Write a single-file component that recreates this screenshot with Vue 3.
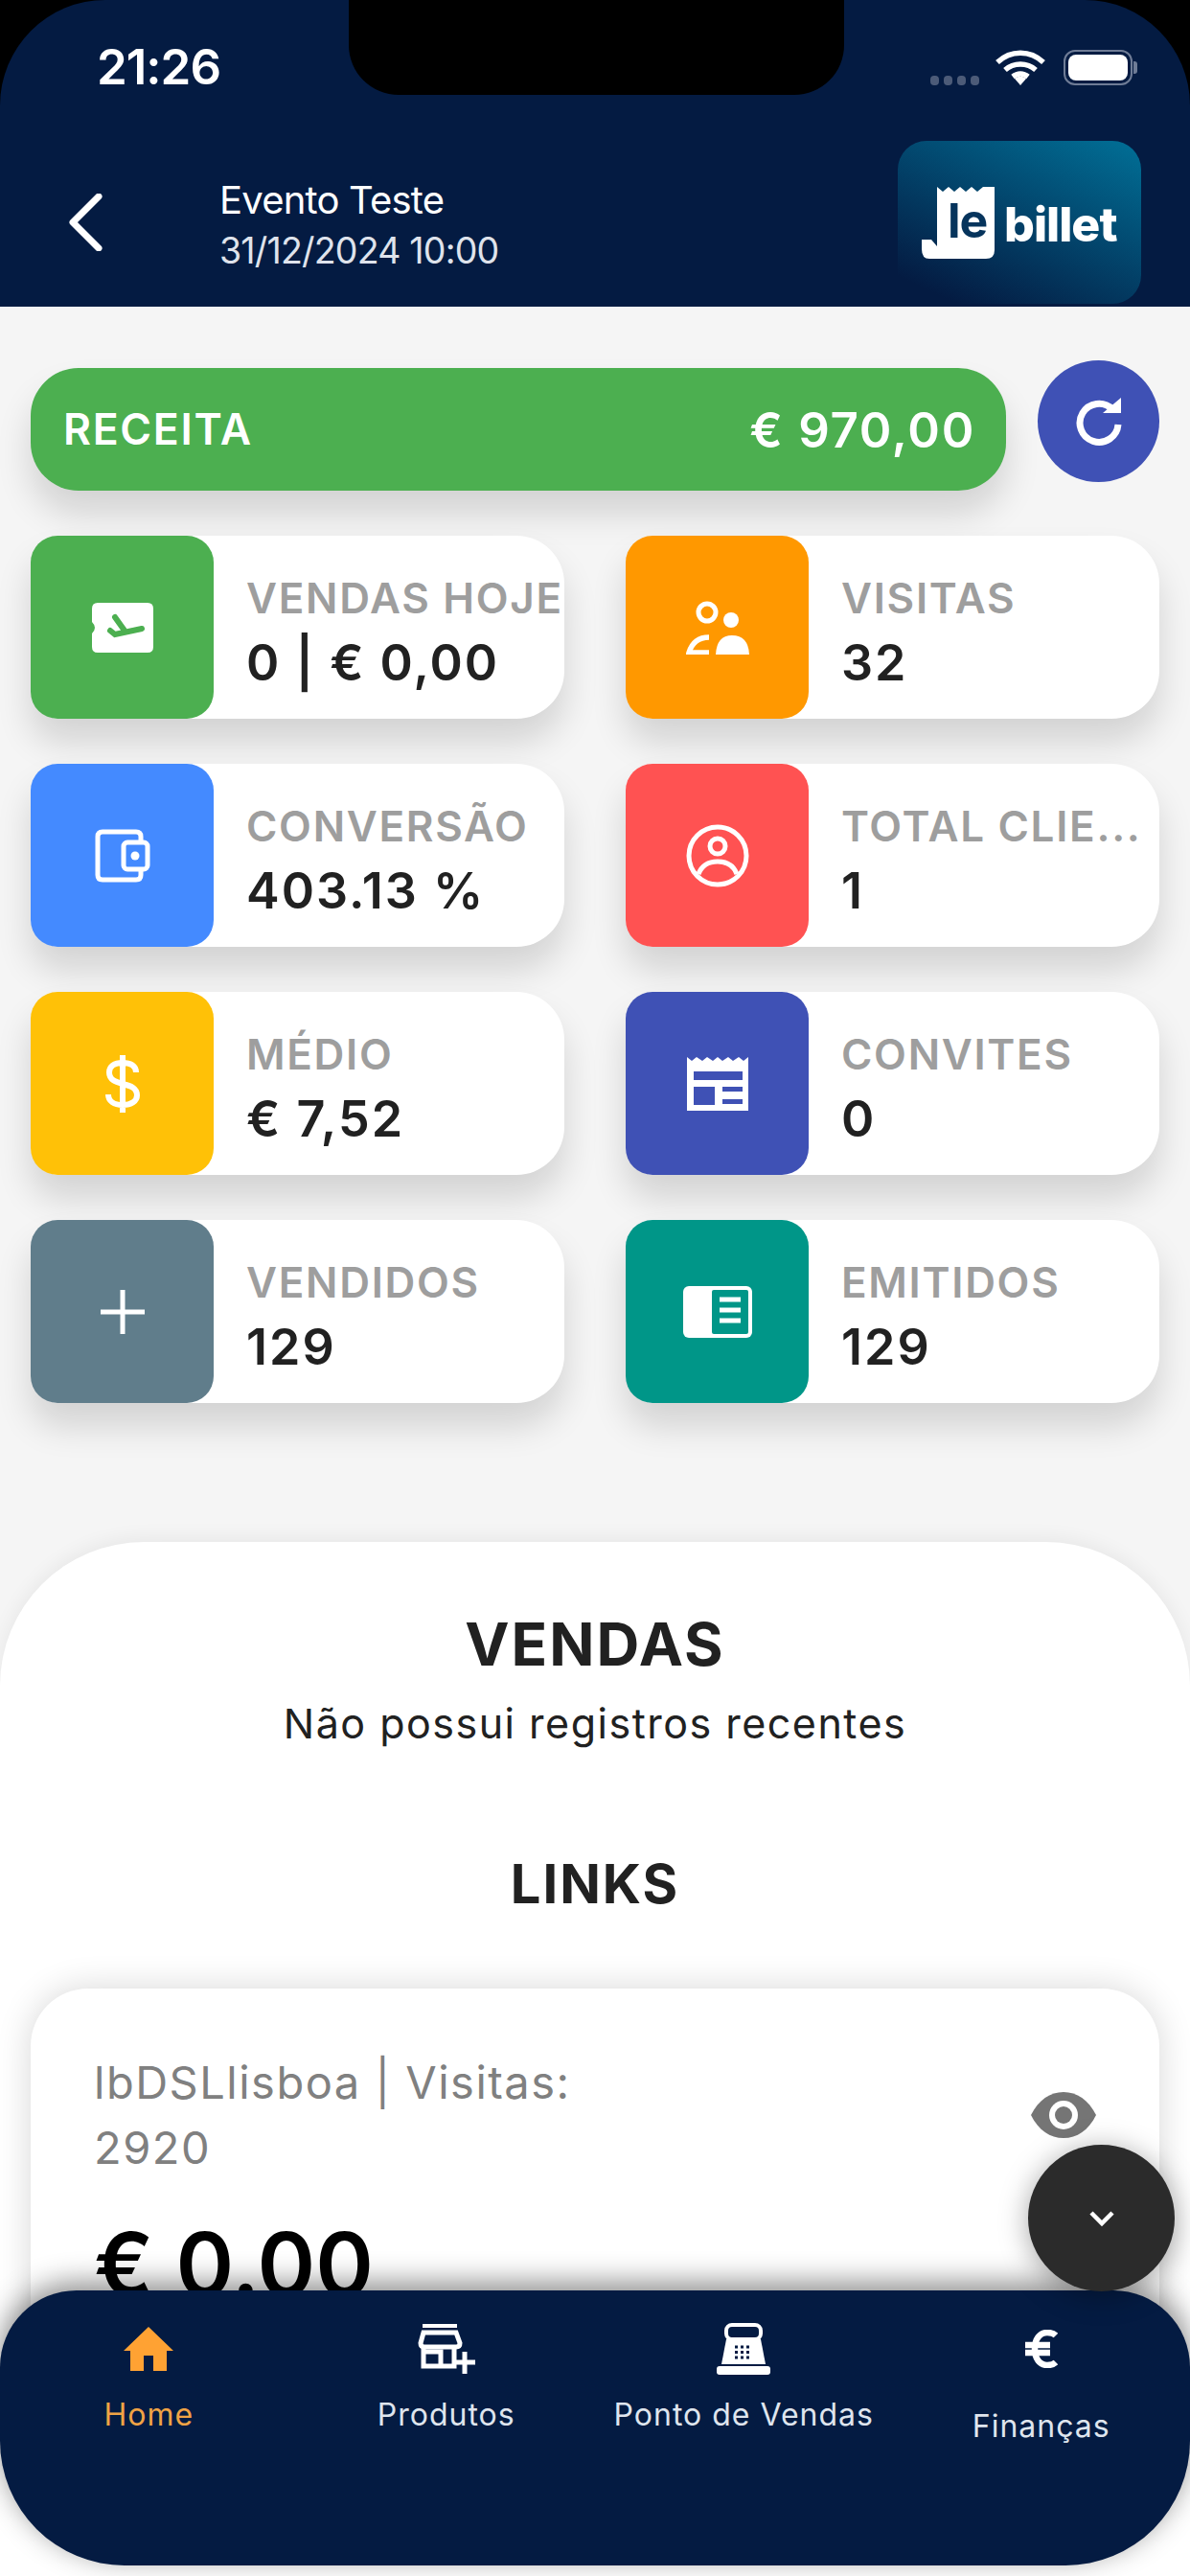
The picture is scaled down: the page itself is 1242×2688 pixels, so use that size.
<template>
  <div class="phone">
    <div class="notch"></div>
    <header class="top">
      <div class="status">
        <span class="time">21:26</span>
        <div class="status-icons">
          <div class="signal"><i></i><i></i><i></i><i></i></div>
          <svg class="wifi" viewBox="0 0 54 38">
            <path d="M3 13 C17 0 37 0 51 13 M11 21 C20 13 34 13 43 21 M19 28 C24 24 30 24 35 28" fill="none" stroke="#fff" stroke-width="5.5" />
            <path d="M21 30 L27 37 L33 30 C29 27 25 27 21 30Z" fill="#fff" />
          </svg>
          <div class="battery"><div class="battery-fill"></div></div>
        </div>
      </div>
      <div class="bar">
        <svg class="back" viewBox="0 0 36 60">
          <path d="M32 3 L5 30 L32 57" fill="none" stroke="#fff" stroke-width="7" stroke-linecap="round" stroke-linejoin="round" />
        </svg>
        <div class="event">
          <div class="event-name">Evento Teste</div>
          <div class="event-date">31/12/2024 10:00</div>
        </div>
        <div class="logo">
          <div class="logo-mark">
            <svg class="logo-paper" viewBox="0 0 76 75">
              <path d="M16 0 L22 5 L28 0 L34 5 L40 0 L46 5 L52 0 L58 5 L64 0 L76 0 L76 66 Q76 75 67 75 L8 75 Q0 75 0 65 L0 55 L10 55 L16 62Z" fill="#fff" />
            </svg>
            <span class="logo-le">le</span>
          </div>
          <span class="logo-billet">billet</span>
        </div>
      </div>
    </header>

    <main class="content">
      <div class="revenue-row">
        <div class="revenue">
          <span class="revenue-label">RECEITA</span>
          <span class="revenue-value">€ 970,00</span>
        </div>
        <button class="refresh">
          <svg viewBox="0 0 48 50" width="48" height="50">
            <path d="M38 12 A20 20 0 1 0 44 28" fill="none" stroke="#fff" stroke-width="7" />
            <path d="M28 16 L47 16 L47 0Z" fill="#fff" />
          </svg>
        </button>
      </div>

      <div class="stats">
        <div v-for="s in stats" :key="s.label" class="stat">
          <div class="stat-icon" :style="{ background: s.color }">
            <svg v-if="s.icon === 'ticket'" viewBox="0 0 64 52" width="64" height="52">
              <path d="M6 0 H58 Q64 0 64 6 V46 Q64 52 58 52 H6 Q0 52 0 46 V32 Q6 26 0 20 V6 Q0 0 6 0Z" fill="#fff" />
              <path d="M19 29 L24 33 L52 27 M24 15 L34 29" fill="none" :stroke="s.color" stroke-width="6" stroke-linecap="round" />
            </svg>
            <svg v-else-if="s.icon === 'people'" viewBox="0 0 66 56" width="66" height="56">
              <circle cx="22" cy="12" r="9" fill="none" stroke="#fff" stroke-width="5" />
              <circle cx="47" cy="20" r="8" fill="#fff" />
              <path d="M31 56 Q32 36 48 36 Q65 36 66 56Z" fill="#fff" />
              <path d="M24 38 Q8 38 3 54 L24 54" fill="none" stroke="#fff" stroke-width="5.5" />
            </svg>
            <svg v-else-if="s.icon === 'wallet'" viewBox="0 0 58 56" width="58" height="56">
              <path d="M48 14 V8 Q48 3 43 3 H8 Q3 3 3 8 V48 Q3 53 8 53 H43 Q48 53 48 48 V42" fill="none" stroke="#fff" stroke-width="5" />
              <rect x="30" y="14" width="25" height="28" rx="4" fill="none" stroke="#fff" stroke-width="5" />
              <circle cx="42" cy="28" r="4.5" fill="#fff" />
            </svg>
            <svg v-else-if="s.icon === 'user'" viewBox="0 0 66 66" width="66" height="66">
              <circle cx="33" cy="33" r="30" fill="none" stroke="#fff" stroke-width="5" />
              <circle cx="33" cy="23" r="8" fill="none" stroke="#fff" stroke-width="5" />
              <path d="M13 52 Q18 39 33 39 Q48 39 53 52" fill="none" stroke="#fff" stroke-width="5" />
            </svg>
            <svg v-else-if="s.icon === 'dollar'" viewBox="0 0 36 60" width="36" height="60">
              <path d="M32 18 C32 11 26 8 18 8 C9 8 4 12 4 18 C4 26 11 28 18 30 C26 32 33 34 33 42 C33 48 27 52 18 52 C9 52 3 48 3 41 M18 0 V60" fill="none" stroke="#fff" stroke-width="6" />
            </svg>
            <svg v-else-if="s.icon === 'receipt'" viewBox="0 0 64 57" width="64" height="57">
              <path fill-rule="evenodd" fill="#fff" d="M0 1 L5 5 L10 1 L16 5 L21 1 L27 5 L32 1 L37 5 L43 1 L48 5 L54 1 L59 5 L64 1 V57 H0Z M7 16 V25 H58 V16Z M7 32 V51 H29 V32Z M37 32 V37 H58 V32Z M37 45 V50 H58 V45Z" />
            </svg>
            <svg v-else-if="s.icon === 'plus'" viewBox="0 0 46 46" width="46" height="46">
              <path d="M23 0 V46 M0 23 H46" stroke="#fff" stroke-width="5" />
            </svg>
            <svg v-else-if="s.icon === 'card'" viewBox="0 0 72 54" width="72" height="54">
              <rect width="72" height="54" rx="6" fill="#fff" />
              <rect x="30" y="4" width="38" height="46" rx="2" :fill="s.color" />
              <path d="M38 14 H60 M38 25 H60 M38 36 H60" stroke="#fff" stroke-width="5" />
            </svg>
          </div>
          <div class="stat-text">
            <div class="stat-label">{{ s.label }}</div>
            <div class="stat-value">{{ s.value }}</div>
          </div>
        </div>
      </div>

      <section class="sheet">
        <h2 class="sheet-title">VENDAS</h2>
        <p class="sheet-empty">Não possui registros recentes</p>
        <h3 class="sheet-links">LINKS</h3>
        <div class="link-card">
          <div class="link-head">
            <div class="link-name">lbDSLlisboa | Visitas:<br />2920</div>
            <svg class="eye" viewBox="0 0 68 48">
              <path d="M0 24 C8 8 20 0 34 0 C48 0 60 8 68 24 C60 40 48 48 34 48 C20 48 8 40 0 24Z" fill="#757575" />
              <circle cx="34" cy="24" r="15" fill="#fff" />
              <circle cx="34" cy="24" r="9" fill="#757575" />
            </svg>
          </div>
          <div class="link-total">€ 0.00</div>
        </div>
      </section>
    </main>

    <button class="fab">
      <svg viewBox="0 0 28 18" width="28" height="18">
        <path d="M3 3 L14 14 L25 3" fill="none" stroke="#fff" stroke-width="4.5" />
      </svg>
    </button>

    <nav class="tabs">
      <div class="tab tab-active">
        <div class="tab-icon">
          <svg viewBox="0 0 52 46" width="52" height="46">
            <path fill="#ffa233" fill-rule="evenodd" d="M26 0 L52 25 H45 V46 H31 V30 H21 V46 H7 V25 H0Z" />
          </svg>
        </div>
        <span>Home</span>
      </div>
      <div class="tab">
        <div class="tab-icon">
          <svg viewBox="0 0 60 52" width="60" height="52">
            <path d="M5 2 H41" stroke="#fff" stroke-width="4" />
            <path d="M3 20 L6 9 H40 L44 20 Q44 24 40 24 H7 Q3 24 3 20Z" fill="none" stroke="#fff" stroke-width="5" />
            <path d="M6 24 V44 H38 V24 M8 29 H24 V42" fill="none" stroke="#fff" stroke-width="5" />
            <path d="M49 29 V52 M38 40 H60" stroke="#fff" stroke-width="5" />
          </svg>
        </div>
        <span>Produtos</span>
      </div>
      <div class="tab">
        <div class="tab-icon">
          <svg viewBox="0 0 56 54" width="56" height="54">
            <rect x="10" y="2" width="36" height="15" rx="6" fill="none" stroke="#fff" stroke-width="4" />
            <path d="M10 17 H46 L51 43 H5Z" fill="#fff" />
            <rect y="45" width="56" height="9" rx="3" fill="#fff" />
            <path d="M19 25 H37 M19 30.5 H37 M19 36 H37" stroke="#041b42" stroke-width="3" stroke-dasharray="3 3" />
          </svg>
        </div>
        <span>Ponto de Vendas</span>
      </div>
      <div class="tab tab-low">
        <div class="tab-icon">
          <svg viewBox="0 0 34 40" width="34" height="40">
            <path d="M32 6 C29 3 26 3 23 3 C15 3 10 10 10 20 C10 30 15 37 23 37 C26 37 29 37 32 34 M0 16 H26 M0 24 H26" fill="none" stroke="#fff" stroke-width="6.5" />
          </svg>
        </div>
        <span>Finanças</span>
      </div>
    </nav>
  </div>
</template>

<script setup>
const stats = [
  { label: 'VENDAS HOJE', value: '0 | € 0,00', color: '#4caf50', icon: 'ticket' },
  { label: 'VISITAS', value: '32', color: '#ff9800', icon: 'people' },
  { label: 'CONVERSÃO', value: '403.13 %', color: '#448aff', icon: 'wallet' },
  { label: 'TOTAL CLIE...', value: '1', color: '#ff5252', icon: 'user' },
  { label: 'MÉDIO', value: '€ 7,52', color: '#ffc107', icon: 'dollar' },
  { label: 'CONVITES', value: '0', color: '#3f51b5', icon: 'receipt' },
  { label: 'VENDIDOS', value: '129', color: '#607d8b', icon: 'plus' },
  { label: 'EMITIDOS', value: '129', color: '#009688', icon: 'card' },
];
</script>

<style>
body {
  background: #000;
}
</style>

<style scoped>
.phone {
  position: relative;
  width: 1242px;
  height: 2688px;
  overflow: hidden;
  background: #000;
  font-family: Inter, "Liberation Sans", sans-serif;
}

.notch {
  position: absolute;
  top: 0;
  left: 364px;
  width: 517px;
  height: 99px;
  background: #000;
  border-radius: 0 0 52px 52px;
  z-index: 5;
}

.top {
  height: 320px;
  background: #041b42;
  border-radius: 110px 110px 0 0;
  box-sizing: border-box;
  overflow: hidden;
}

.status {
  height: 147px;
  display: flex;
  justify-content: space-between;
  padding: 42px 60px 0 101px;
  box-sizing: border-box;
}

.time {
  color: #fff;
  font-size: 51px;
  line-height: 56px;
  font-weight: 600;
  letter-spacing: -1px;
}

.status-icons {
  display: flex;
  align-items: flex-start;
  padding-top: 10px;
}

.signal {
  display: flex;
  gap: 5px;
  margin-top: 27px;
  margin-right: 16px;
}

.signal i {
  width: 9px;
  height: 10px;
  border-radius: 4px;
  background: #4c5b78;
}

.wifi {
  width: 54px;
  height: 38px;
  margin-right: 18px;
}

.battery {
  position: relative;
  width: 72px;
  height: 37px;
  border: 2px solid #6f7c96;
  border-radius: 12px;
  box-sizing: border-box;
  padding: 3px;
}

.battery::after {
  content: "";
  position: absolute;
  left: 71px;
  top: 10px;
  width: 4px;
  height: 13px;
  background: #6f7c96;
  border-radius: 0 3px 3px 0;
}

.battery-fill {
  height: 100%;
  background: #fff;
  border-radius: 8px;
}

.bar {
  height: 173px;
  display: flex;
  align-items: flex-start;
  padding: 0 51px 0 71px;
}

.back {
  width: 36px;
  height: 60px;
  margin-top: 55px;
}

.event {
  margin-left: 122px;
  flex: 1;
  padding-top: 37px;
  color: #fff;
}

.event-name {
  font-size: 40px;
  line-height: 50px;
  letter-spacing: -0.8px;
}

.event-date {
  font-size: 37.5px;
  line-height: 50px;
  letter-spacing: -0.8px;
  color: #dfe3ec;
  margin-top: 3px;
}

.logo {
  width: 254px;
  height: 170px;
  border-radius: 30px;
  background: linear-gradient(25deg, #041b42 10%, #016b92 95%);
  display: flex;
  align-items: center;
  gap: 10px;
  padding-left: 25px;
  box-sizing: border-box;
}

.logo-mark {
  position: relative;
  width: 76px;
  height: 75px;
}

.logo-paper {
  display: block;
  width: 76px;
  height: 75px;
}

.logo-le {
  position: absolute;
  left: 27px;
  top: 5px;
  font-size: 50px;
  line-height: 60px;
  font-weight: 700;
  color: #06345c;
  letter-spacing: -1px;
}

.logo-billet {
  color: #fff;
  font-size: 50px;
  line-height: 60px;
  font-weight: 800;
  letter-spacing: -1px;
  margin-top: 4px;
}

.content {
  height: 2368px;
  background: #f5f5f5;
  box-sizing: border-box;
  padding-top: 56px;
}

.revenue-row {
  display: flex;
  align-items: flex-start;
  padding: 0 32px;
  gap: 33px;
}

.revenue {
  flex: 1;
  height: 128px;
  margin-top: 8px;
  border-radius: 50px;
  background: #4caf50;
  color: #fff;
  display: flex;
  align-items: center;
  justify-content: space-between;
  padding: 0 32px 0 34px;
  box-shadow: 0 24px 36px rgba(0, 0, 0, 0.14);
  font-weight: 600;
  letter-spacing: 1.7px;
}

.revenue-label {
  font-size: 44.5px;
}

.revenue-value {
  font-size: 51px;
}

.refresh {
  width: 127px;
  height: 127px;
  border: none;
  border-radius: 50%;
  background: #3f51b5;
  display: flex;
  align-items: center;
  justify-content: center;
  padding: 0;
}

.stats {
  display: grid;
  grid-template-columns: 557px 557px;
  justify-content: space-between;
  row-gap: 47px;
  padding: 0 32px;
  margin-top: 47px;
}

.stat {
  display: flex;
  height: 191px;
  background: #fff;
  border-radius: 30px 50px 50px 30px;
  box-shadow: 0 24px 36px rgba(0, 0, 0, 0.14);
  min-width: 0;
}

.stat-icon {
  flex: none;
  width: 191px;
  height: 191px;
  border-radius: 28px;
  display: flex;
  align-items: center;
  justify-content: center;
}

.stat-text {
  min-width: 0;
  flex: 1;
  padding: 40px 0 0 34px;
}

.stat-label {
  font-size: 44px;
  line-height: 50px;
  font-weight: 600;
  color: #9e9e9e;
  letter-spacing: 1.7px;
  white-space: nowrap;
}

.stat-value {
  font-size: 52px;
  line-height: 58px;
  font-weight: 600;
  color: #212121;
  letter-spacing: 2px;
  margin-top: 14px;
}

.sheet {
  margin-top: 145px;
  height: 1100px;
  background: #fff;
  border-radius: 150px 150px 0 0;
  box-shadow: 0 -4px 20px rgba(0, 0, 0, 0.06);
  text-align: center;
  padding-top: 74px;
  box-sizing: border-box;
}

.sheet-title {
  margin: 0;
  font-size: 62px;
  line-height: 66px;
  font-weight: 700;
  color: #212121;
  letter-spacing: 2px;
}

.sheet-empty {
  margin: 21px 0 0;
  font-size: 43px;
  line-height: 56px;
  color: #212121;
  letter-spacing: 1.5px;
}

.sheet-links {
  margin: 108px 0 0;
  font-size: 56px;
  line-height: 64px;
  font-weight: 700;
  color: #212121;
  letter-spacing: 2px;
}

.link-card {
  margin: 77px 32px 0;
  height: 500px;
  background: #fff;
  border-radius: 60px;
  box-shadow: 0 0 36px rgba(0, 0, 0, 0.16);
  box-sizing: border-box;
  padding: 64px 66px 0;
  text-align: left;
}

.link-head {
  display: flex;
  align-items: center;
  justify-content: space-between;
}

.link-name {
  font-size: 47px;
  line-height: 68px;
  color: #808080;
  letter-spacing: 1.5px;
}

.eye {
  width: 68px;
  height: 48px;
}

.link-total {
  margin-top: 38px;
  font-size: 92px;
  line-height: 100px;
  font-weight: 600;
  color: #000;
}

.fab {
  position: absolute;
  left: 1073px;
  top: 2238px;
  width: 153px;
  height: 153px;
  border: none;
  border-radius: 50%;
  background: #2b2b2b;
  box-shadow: 0 4px 30px rgba(0, 0, 0, 0.35);
  display: flex;
  align-items: center;
  justify-content: center;
  padding: 0;
  z-index: 3;
}

.tabs {
  position: absolute;
  left: 0;
  right: 0;
  top: 2390px;
  height: 287px;
  background: #041b42;
  border-radius: 80px 80px 130px 130px;
  box-shadow: 0 -8px 30px rgba(0, 0, 0, 0.45);
  display: grid;
  grid-template-columns: repeat(4, 1fr);
  z-index: 2;
}

.tab {
  display: flex;
  flex-direction: column;
  align-items: center;
  color: #dfe5ee;
  font-size: 32px;
  line-height: 40px;
  letter-spacing: 1px;
  padding-top: 32px;
}

.tab-icon {
  height: 58px;
  display: flex;
  align-items: center;
  margin-bottom: 20px;
}

.tab-low .tab-icon {
  margin-bottom: 32px;
}

.tab-active {
  color: #f0a345;
}
</style>
